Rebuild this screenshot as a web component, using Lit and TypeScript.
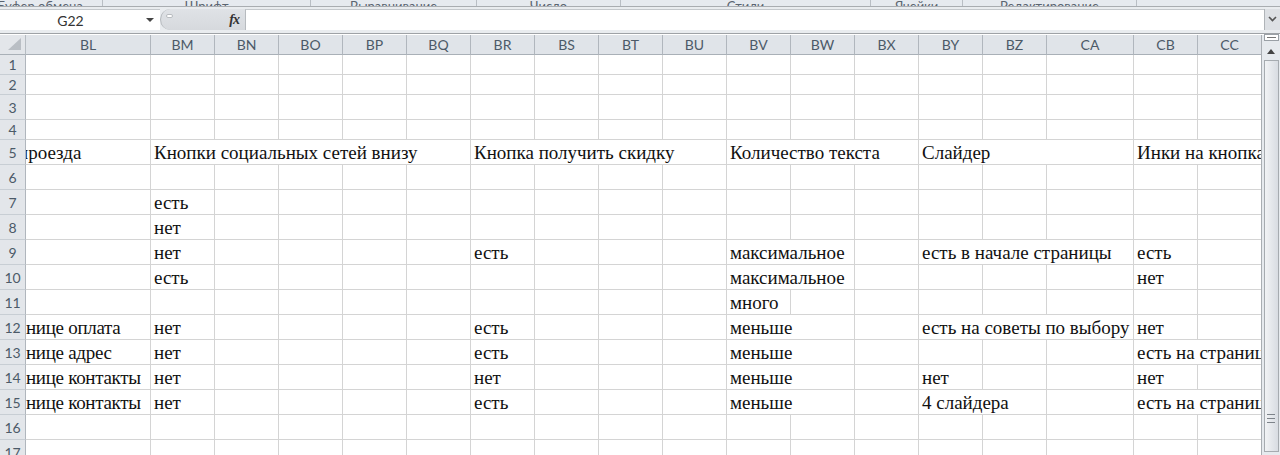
import { LitElement, html, css } from "lit";
import { customElement } from "lit/decorators.js";

const COLS: [string, number][] = [
  ["BL", 125], ["BM", 64], ["BN", 64], ["BO", 64], ["BP", 64], ["BQ", 64], ["BR", 64], ["BS", 64], ["BT", 64],
  ["BU", 64], ["BV", 64], ["BW", 64], ["BX", 64], ["BY", 64], ["BZ", 64], ["CA", 87], ["CB", 64], ["CC", 64],
];
const ROW_H = [20, 20, 25, 20, 25, 25, 25, 25, 25, 25, 25, 25, 25, 25, 25, 25, 25];
type Cell = [number, number, string];
const DATA: Record<number, Cell[]> = {
  5: [[0, 1, "проезда"], [1, 5, "Кнопки социальных сетей внизу"], [6, 4, "Кнопка получить скидку"], [10, 3, "Количество текста"], [13, 3, "Слайдер"], [16, 2, "Инки на кнопках"]],
  7: [[1, 1, "есть"]],
  8: [[1, 1, "нет"]],
  9: [[1, 1, "нет"], [6, 1, "есть"], [10, 2, "максимальное"], [13, 3, "есть в начале страницы"], [16, 1, "есть"]],
  10: [[1, 1, "есть"], [10, 2, "максимальное"], [16, 1, "нет"]],
  11: [[10, 1, "много"]],
  12: [[0, 1, "нице оплата"], [1, 1, "нет"], [6, 1, "есть"], [10, 2, "меньше"], [13, 3, "есть на советы по выбору"], [16, 1, "нет"]],
  13: [[0, 1, "нице адрес"], [1, 1, "нет"], [6, 1, "есть"], [10, 2, "меньше"], [16, 2, "есть на странице"]],
  14: [[0, 1, "нице контакты"], [1, 1, "нет"], [6, 1, "нет"], [10, 2, "меньше"], [13, 1, "нет"], [16, 1, "нет"]],
  15: [[0, 1, "нице контакты"], [1, 1, "нет"], [6, 1, "есть"], [10, 2, "меньше"], [13, 2, "4 слайдера"], [16, 2, "есть на странице"]],
};
const TEMPLATE = COLS.map(([, w]) => `${w}px`).join(" ");
const RIBBON: [string, number, number][] = [
  ["Буфер обмена", 103, 22], ["Шрифт", 208, 0], ["Выравнивание", 166, 0], ["Число", 144, 0], ["Стили", 250, 0], ["Ячейки", 92, 0], ["Редактирование", 174, 0],
];

@customElement("app-root")
export class AppRoot extends LitElement {
  static styles = css`
    :host { display: block; width: 1280px; height: 455px; overflow: hidden; background: #fff; font-family: "Liberation Serif", serif; }
    .ribbon { height: 6px; display: flex; overflow: hidden; background: #e6eaef; border-bottom: 1px solid #a9adb1; }
    .group { flex: none; height: 6px; box-sizing: border-box; border-right: 1px solid #b9bec4; display: flex; justify-content: center; align-items: flex-end; font: 13px/13px Lato, sans-serif; color: #5a6470; overflow: hidden; }
    .group span { transform: translateY(7px); white-space: nowrap; }
    .fbar { height: 27px; background: #e9ecef; box-sizing: border-box; padding: 2px 0 3px; display: flex; border-bottom: 1px solid #9ea2a6; }
    .name { width: 160px; flex: none; background: #fff; display: flex; align-items: center; font: 14px Lato, sans-serif; color: #333; box-sizing: border-box; border-top: 1px solid #c4c8cc; }
    .name b { font-weight: 400; width: 141px; text-align: center; }
    .caret { width: 0; height: 0; border: 4px solid transparent; border-top-color: #444; border-bottom: 0; margin-left: 5px; }
    .fxbox { width: 85px; flex: none; background: linear-gradient(#dfe2e6, #d6d9dd); border-radius: 12px 0 0 12px; border-left: 1px solid #b4b8bc; box-sizing: border-box; display: flex; align-items: center; justify-content: space-between; padding: 0 6px 0 5px; }
    .dash { width: 7px; height: 4px; background: #fff; border: 1px solid #b8bcc0; border-radius: 2px; box-sizing: border-box; margin-top: -8px; }
    .fx { font: italic 700 14px "Liberation Serif", serif; color: #333; letter-spacing: -1px; }
    .input { flex: 1; background: #fff; border-left: 1px solid #b7bbbf; border-top: 1px solid #c4c8cc; }
    .expand { width: 16px; flex: none; background: #dde0e4; display: flex; align-items: center; justify-content: center; border-left: 1px solid #b0b4b8; box-sizing: border-box; }
    .sheet { display: flex; height: 421px; background: #fff; border-top: 1px solid #fff; }
    .main { width: 1261px; flex: none; overflow: hidden; }
    .head { display: flex; height: 20px; }
    .corner { width: 26px; flex: none; height: 20px; box-sizing: border-box; background: #e3e6ea; border-right: 1px solid #b6bcc2; border-bottom: 1px solid #a9b0b7; display: flex; align-items: flex-end; justify-content: flex-end; padding: 0 4px 4px 0; }
    .colhead { flex: none; box-sizing: border-box; height: 20px; background: #e0e4e9; border-right: 1px solid #b0b6bd; border-bottom: 1px solid #a9b0b7; text-align: center; font: 14px/19px Lato, sans-serif; color: #4c5a68; }
    .row { display: flex; }
    .rowhead { width: 26px; flex: none; box-sizing: border-box; background: #e3e6ea; border-right: 1px solid #b0b6bd; border-bottom: 1px solid #c8ced4; font: 14px Lato, sans-serif; color: #4c5a68; display: flex; align-items: center; justify-content: center; }
    .cells { display: grid; flex: none; }
    .cell { box-sizing: border-box; border-right: 1px solid #d4d4d4; border-bottom: 1px solid #d4d4d4; min-width: 0; display: flex; align-items: flex-end; overflow: hidden; padding: 0 0 0 3px; font-size: 19px; line-height: 22px; color: #111; white-space: nowrap; }
    .cell.first { padding-left: 0; letter-spacing: -0.3px; }
    .cell.clipped { padding-left: 0; }
    .cell.clipped span { margin-left: -8px; }
    .scroll { flex: 1; background: #e6eaee; border-left: 1px solid #a9aeb3; display: flex; flex-direction: column; align-items: center; }
    .split { width: 15px; height: 7px; margin-top: -1px; background: #fff; border: 1px solid #9aa0a6; box-sizing: border-box; display: flex; align-items: center; justify-content: center; }
    .split i { width: 9px; height: 1px; background: #777; }
    .up { width: 0; height: 0; border: 4px solid transparent; border-bottom: 5px solid #444; border-top: 0; margin: 8px 0 6px; }
    .thumb { width: 15px; flex: 1; margin-bottom: 4px; box-sizing: border-box; background: linear-gradient(90deg, #f1f3f5, #d8dce2); border: 1px solid #a6abb0; display: flex; align-items: center; justify-content: center; }
    .grip { width: 8px; height: 7px; margin-top: 324px; border-top: 1px solid #7d838a; border-bottom: 1px solid #7d838a; background: linear-gradient(#7d838a, #7d838a) center/100% 1px no-repeat; }
  `;

  private renderRow(height: number, i: number) {
    const n = i + 1;
    const cells = DATA[n] ?? [];
    const out: unknown[] = [];
    let c = 0;
    while (c < COLS.length) {
      const hit = cells.find((d) => d[0] === c);
      if (hit) {
        const cls = c !== 0 ? "cell" : n === 5 ? "cell clipped" : "cell first";
        out.push(html`<div class=${cls} style="grid-column: span ${hit[1]}"><span>${hit[2]}</span></div>`);
        c += hit[1];
      } else {
        out.push(html`<div class="cell"></div>`);
        c += 1;
      }
    }
    return html`<div class="row" style="height:${height}px">
      <div class="rowhead">${n}</div>
      <div class="cells" style="grid-template-columns:${TEMPLATE}">${out}</div>
    </div>`;
  }

  render() {
    return html`
      <div class="ribbon">
        ${RIBBON.map(([t, w, pad]) => html`<div class="group" style="width:${w}px;padding-right:${pad}px"><span>${t}</span></div>`)}
      </div>
      <div class="fbar">
        <div class="name"><b>G22</b><span class="caret"></span></div>
        <div class="fxbox"><span class="dash"></span><span class="fx">fx</span></div>
        <div class="input"></div>
        <div class="expand">
          <svg width="9" height="7" viewBox="0 0 9 7"><path d="M1 1l3.5 3.5L8 1" fill="none" stroke="#555" stroke-width="1.6"/></svg>
        </div>
      </div>
      <div class="sheet">
        <div class="main">
          <div class="head">
            <div class="corner"><svg width="13" height="12" viewBox="0 0 13 12"><path d="M13 0v12H0z" fill="#b9bec4"/></svg></div>
            ${COLS.map(([t, w]) => html`<div class="colhead" style="width:${w}px">${t}</div>`)}
          </div>
          ${ROW_H.map((h, i) => this.renderRow(h, i))}
        </div>
        <div class="scroll">
          <div class="split"><i></i></div>
          <div class="up"></div>
          <div class="thumb"><span class="grip"></span></div>
        </div>
      </div>
    `;
  }
}
